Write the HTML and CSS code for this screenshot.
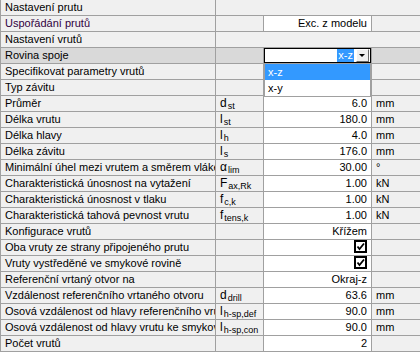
FILE: index.html
```
<!DOCTYPE html>
<html lang="cs">
<head>
    <meta charset="UTF-8">
    <title>Nastavení vrutů</title>
    <link rel="stylesheet" href="styles.css">
</head>
<body>
    <div class="grid">
        <div class="lbl">Nastavení prutu</div>
        <div class="head"></div>

        <div class="lbl purple">Uspořádání prutů</div>
        <div class="sym"></div>
        <div class="val edit">Exc. z modelu</div>
        <div class="unit"></div>

        <div class="lbl">Nastavení vrutů</div>
        <div class="head"></div>

        <div class="lbl sel">Rovina spoje</div>
        <div class="sym sel"></div>
        <div class="val combo">
            <span class="pick">x-z</span>
            <span class="arrow"></span>
        </div>
        <div class="unit sel"></div>

        <div class="lbl">Specifikovat parametry vrutů</div>
        <div class="sym"></div>
        <div class="val"></div>
        <div class="unit"></div>

        <div class="lbl">Typ závitu</div>
        <div class="sym"></div>
        <div class="val"></div>
        <div class="unit"></div>

        <div class="lbl">Průměr</div>
        <div class="sym">d<sub>st</sub></div>
        <div class="val edit">6.0</div>
        <div class="unit">mm</div>

        <div class="lbl">Délka vrutu</div>
        <div class="sym">l<sub>st</sub></div>
        <div class="val edit">180.0</div>
        <div class="unit">mm</div>

        <div class="lbl">Délka hlavy</div>
        <div class="sym">l<sub>h</sub></div>
        <div class="val edit">4.0</div>
        <div class="unit">mm</div>

        <div class="lbl">Délka závitu</div>
        <div class="sym">l<sub>s</sub></div>
        <div class="val edit">176.0</div>
        <div class="unit">mm</div>

        <div class="lbl">Minimální úhel mezi vrutem a směrem vláken</div>
        <div class="sym">α<sub>lim</sub></div>
        <div class="val edit">30.00</div>
        <div class="unit">°</div>

        <div class="lbl">Charakteristická únosnost na vytažení</div>
        <div class="sym">F<sub>ax,Rk</sub></div>
        <div class="val edit">1.00</div>
        <div class="unit">kN</div>

        <div class="lbl">Charakteristická únosnost v tlaku</div>
        <div class="sym">f<sub>c,k</sub></div>
        <div class="val edit">1.00</div>
        <div class="unit">kN</div>

        <div class="lbl">Charakteristická tahová pevnost vrutu</div>
        <div class="sym">f<sub>tens,k</sub></div>
        <div class="val edit">1.00</div>
        <div class="unit">kN</div>

        <div class="lbl">Konfigurace vrutů</div>
        <div class="sym"></div>
        <div class="val edit">Křížem</div>
        <div class="unit"></div>

        <div class="lbl">Oba vruty ze strany připojeného prutu</div>
        <div class="sym"></div>
        <div class="val edit">
            <svg class="check" width="13" height="13" viewBox="0 0 13 13">
                <rect x="0.5" y="0.5" width="12" height="12" fill="#fff" stroke="#000"/>
                <rect x="1.5" y="1.5" width="10" height="10" fill="none" stroke="#000"/>
                <path d="M3.5 6.5 L5.5 9 L10 3.5" fill="none" stroke="#000" stroke-width="1.8"/>
            </svg>
        </div>
        <div class="unit"></div>

        <div class="lbl">Vruty vystředěné ve smykové rovině</div>
        <div class="sym"></div>
        <div class="val edit">
            <svg class="check" width="13" height="13" viewBox="0 0 13 13">
                <rect x="0.5" y="0.5" width="12" height="12" fill="#fff" stroke="#000"/>
                <rect x="1.5" y="1.5" width="10" height="10" fill="none" stroke="#000"/>
                <path d="M3.5 6.5 L5.5 9 L10 3.5" fill="none" stroke="#000" stroke-width="1.8"/>
            </svg>
        </div>
        <div class="unit"></div>

        <div class="lbl">Referenční vrtaný otvor na</div>
        <div class="sym"></div>
        <div class="val edit">Okraj-z</div>
        <div class="unit"></div>

        <div class="lbl">Vzdálenost referenčního vrtaného otvoru</div>
        <div class="sym">d<sub>drill</sub></div>
        <div class="val edit">63.6</div>
        <div class="unit">mm</div>

        <div class="lbl">Osová vzdálenost od hlavy referenčního vrutu k bodu</div>
        <div class="sym">l<sub>h-sp,def</sub></div>
        <div class="val edit">90.0</div>
        <div class="unit">mm</div>

        <div class="lbl">Osová vzdálenost od hlavy vrutu ke smykové rovině</div>
        <div class="sym">l<sub>h-sp,con</sub></div>
        <div class="val edit">90.0</div>
        <div class="unit">mm</div>

        <div class="lbl">Počet vrutů</div>
        <div class="sym"></div>
        <div class="val edit">2</div>
        <div class="unit"></div>

        <ul class="list">
            <li class="on">x-z</li>
            <li>x-y</li>
        </ul>
    </div>
</body>
</html>
```

FILE: styles.css
```
body{
    margin: 0;
    font-family: "Liberation Sans", Arial, sans-serif;
    font-size: 11px;
    color: #000;
}

.grid{
    position: relative;
    display: grid;
    grid-template-columns: 214px 47px 107px 1fr;
    grid-auto-rows: 15px;
    gap: 1px;
    width: 419px;
    padding: 0 0 1px 1px;
    background: #a0a0a0;
}

.grid>div{
    background: #f0f0f0;
    line-height: 15px;
    white-space: nowrap;
    overflow: hidden;
}

.lbl{padding-left: 4px;}
.purple{color: #300040;}

.head{grid-column: span 3;}

.sym{
    padding-left: 4px;
    font-size: 12px;
}
.sym sub{
    font-size: 9px;
    vertical-align: -2px;
    line-height: 0;
    margin-left: 1px;
}

.grid>.val{
    text-align: right;
    padding-right: 4px;
}
.grid>.edit{background: #fff;}

.unit{padding-left: 4px;}

.grid>.sel{background: #d9d9d9;}

/* rozbalený combobox */
.grid>.combo{
    display: flex;
    justify-content: flex-end;
    align-items: center;
    padding: 0;
    border: 1px solid #000;
    background: #fff;
    line-height: 13px;
}
.pick{
    background: #3399ff;
    color: #fff;
    padding: 0 1px;
    margin-right: 2px;
}
.arrow{
    position: relative;
    width: 11px;
    height: 11px;
    margin-right: 1px;
    background: #f0f0f0;
    border-top: 1px solid #fff;
    border-left: 1px solid #fff;
    border-right: 1px solid #696969;
    border-bottom: 1px solid #696969;
}
.arrow::after{
    content: "";
    position: absolute;
    left: 2px;
    top: 4px;
    border-left: 3px solid transparent;
    border-right: 3px solid transparent;
    border-top: 3px solid #000;
}

.check{
    display: inline-block;
    vertical-align: -2px;
}

.list{
    position: absolute;
    left: 264px;
    top: 63px;
    width: 107px;
    margin: 0;
    padding: 0;
    list-style: none;
    background: #fff;
    border: 1px solid #a0a0a0;
    box-sizing: border-box;
}
.list li{
    height: 16px;
    line-height: 16px;
    padding-left: 3px;
}
.list .on{
    background: #3399ff;
    color: #fff;
}
```
